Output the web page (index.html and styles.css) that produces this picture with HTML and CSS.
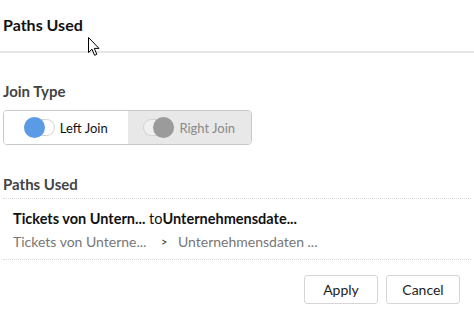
FILE: index.html
```html
<!DOCTYPE html>
<html>
<head>
<meta charset="utf-8">
<link rel="stylesheet" href="styles.css">
</head>
<body>
<div class="dialog">
  <div class="header">
    <h1 class="title">Paths Used</h1>
  </div>
  <div class="content">
    <h2 class="label">Join Type</h2>
    <div class="seg">
      <div class="seg-item active">
        <span class="switch on"><span class="knob"></span></span>
        <span class="seg-text">Left Join</span>
      </div>
      <div class="seg-item">
        <span class="switch off"><span class="knob"></span></span>
        <span class="seg-text">Right Join</span>
      </div>
    </div>
    <h2 class="label paths-label">Paths Used</h2>
    <div class="path-list">
      <div class="path-row">
        <div class="path-main"><b>Tickets von Untern...</b> to<b>Unternehmensdate...</b></div>
        <div class="path-sub"><span class="from">Tickets von Unterne...</span><span class="arrow">&gt;</span><span>Unternehmensdaten ...</span></div>
      </div>
    </div>
    <div class="actions">
      <button class="btn">Apply</button>
      <button class="btn">Cancel</button>
    </div>
  </div>
  <svg class="cursor" width="13" height="20" viewBox="0 0 13 20">
    <path d="M0.5 0.5 L0.5 15.5 L4 12.2 L6.6 18.3 L8.8 17.3 L6.3 11.4 L11 11.4 Z" fill="#fff" stroke="#000" stroke-width="1" stroke-linejoin="miter"/>
  </svg>
</div>
</body>
</html>
```

FILE: styles.css
```css
* { box-sizing: border-box; }
html, body { margin: 0; padding: 0; background: #fff; }
body { font-family: Lato, "Open Sans", sans-serif; color: #222; width: 474px; height: 319px; overflow: hidden; }
.dialog { position: relative; }
.header { height: 53px; border-bottom: 2px solid #e5e5e5; padding: 15px 3px 0; }
.title { margin: 0; font-size: 16px; font-weight: 700; color: #111; line-height: 20px; }
.content { padding: 30px 3px 0; }
.label { margin: 0; font-size: 15px; font-weight: 700; color: #444; line-height: 16px; }
.seg { display: flex; width: 249px; height: 35px; margin-top: 11px; border: 1px solid #c8c8c8; border-radius: 4px; overflow: hidden; }
.seg-item { flex: 1; display: flex; align-items: center; justify-content: center; background: #e8e8e8; }
.seg-item.active { background: #fff; }
.switch { position: relative; width: 31px; height: 17px; border: 1px solid #d2d2d2; border-radius: 9px; background: #fff; margin-right: 5px; }
.switch.off { background: #f0f0f0; }
.knob { position: absolute; top: -3px; width: 21px; height: 21px; border-radius: 50%; }
.switch.on .knob { left: -1px; background: #5b9be6; }
.switch.off .knob { right: -1px; background: #9b9b9b; }
.seg-text { font-size: 13px; color: #111; }
.seg-item:not(.active) .seg-text { color: #888; }
.paths-label { margin-top: 31px; }
.path-list { margin-top: 6px; border-top: 1px dotted #d8d8d8; border-bottom: 1px dotted #d8d8d8; padding: 11px 10px 9px; }
.path-main { font-size: 14.5px; color: #111; line-height: 17px; }
.path-main b { font-weight: 700; }
.path-sub { margin-top: 6px; font-size: 14px; color: #777; line-height: 17px; display: flex; }
.from { width: 148px; white-space: nowrap; }
.arrow { width: 17px; font-size: 11px; color: #333; }
.actions { display: flex; justify-content: flex-end; gap: 8px; margin-top: 15px; padding-right: 11px; }
.btn { width: 74px; height: 29px; border: 1px solid #d6d6d6; border-radius: 3px; background: #fff; font-family: Lato, sans-serif; font-size: 14px; color: #222; padding: 0; }
.cursor { position: absolute; left: 88px; top: 37px; }
```
